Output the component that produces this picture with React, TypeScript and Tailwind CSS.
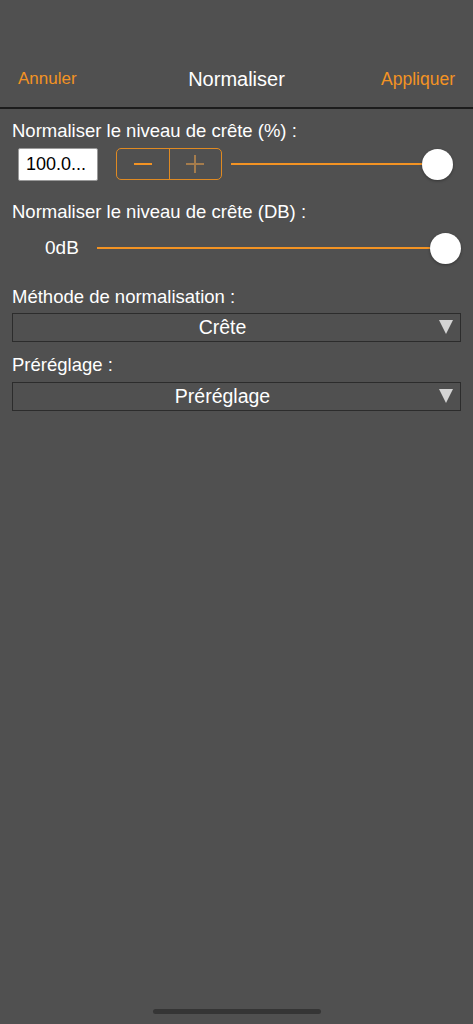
import React from "react";

const font = { fontFamily: '"Liberation Sans", Arial, sans-serif' };

function Thumb() {
  return <div className="h-[31px] w-[31px] shrink-0 rounded-full bg-white shadow-[0_1px_3px_rgba(0,0,0,0.35)]" />;
}

function Slider({ className }: { className?: string }) {
  return (
    <div className={"flex items-center " + (className ?? "")}>
      <div className="h-[2px] flex-1 bg-[#f39323]" />
      <Thumb />
    </div>
  );
}

function Dropdown({ label }: { label: string }) {
  return (
    <div className="relative flex h-[29px] items-center justify-center border border-[#2c2c2c] pr-[28px] text-[19.5px] text-white">
      <span>{label}</span>
      <svg className="absolute right-[7px] top-[6px]" width="14" height="14" viewBox="0 0 14 14">
        <polygon points="0,0 14,0 7,14" fill="#d4d4d4" />
      </svg>
    </div>
  );
}

export default function App() {
  return (
    <div className="flex min-h-[1024px] w-full flex-col bg-[#505050]" style={font}>
      <div className="h-[109px] border-b-2 border-[#1c1c1c] pt-[62px]">
        <div className="relative flex h-[34px] items-center justify-between px-[18px]">
          <span className="text-[17px] text-[#f39323]">Annuler</span>
          <span className="absolute left-1/2 -translate-x-1/2 text-[20px] text-white">Normaliser</span>
          <span className="text-[17.5px] text-[#f39323]">Appliquer</span>
        </div>
      </div>

      <div className="flex flex-col px-[12px] pt-[10px] text-white">
        <div className="h-[24px] text-[18.5px] leading-[24px]">Normaliser le niveau de crête (%) :</div>
        <div className="mt-[4px] flex h-[34px] items-center pl-[6px] pr-[8px]">
          <div className="flex h-[33px] w-[80px] items-center rounded-[2px] border border-[#9a9a9a] bg-white pl-[7px] text-[18px] text-black">
            100.0...
          </div>
          <div className="ml-[18px] flex h-[32px] w-[106px] rounded-[5px] border border-[#e08a22]">
            <div className="flex flex-1 items-center justify-center border-r border-[#e08a22]">
              <div className="h-[2px] w-[18px] bg-[#f39323]" />
            </div>
            <div className="relative flex flex-1 items-center justify-center">
              <div className="h-[2px] w-[18px] bg-[#a57c4c]" />
              <div className="absolute h-[18px] w-[2px] bg-[#a57c4c]" />
            </div>
          </div>
          <Slider className="ml-[9px] flex-1" />
        </div>

        <div className="mt-[19px] h-[24px] text-[18.5px] leading-[24px]">Normaliser le niveau de crête (DB) :</div>
        <div className="mt-[8px] flex h-[32px] items-center">
          <span className="ml-[33px] w-[52px] text-[19px]">0dB</span>
          <Slider className="flex-1" />
        </div>

        <div className="mt-[21px] h-[24px] text-[18.5px] leading-[24px]">Méthode de normalisation :</div>
        <div className="mt-[4px]">
          <Dropdown label="Crête" />
        </div>

        <div className="mt-[11px] h-[24px] text-[18.5px] leading-[24px]">Préréglage :</div>
        <div className="mt-[5px]">
          <Dropdown label="Préréglage" />
        </div>
      </div>

      <div className="mt-auto flex justify-center pb-[10px]">
        <div className="h-[5px] w-[168px] rounded-full bg-[#353535]" />
      </div>
    </div>
  );
}
